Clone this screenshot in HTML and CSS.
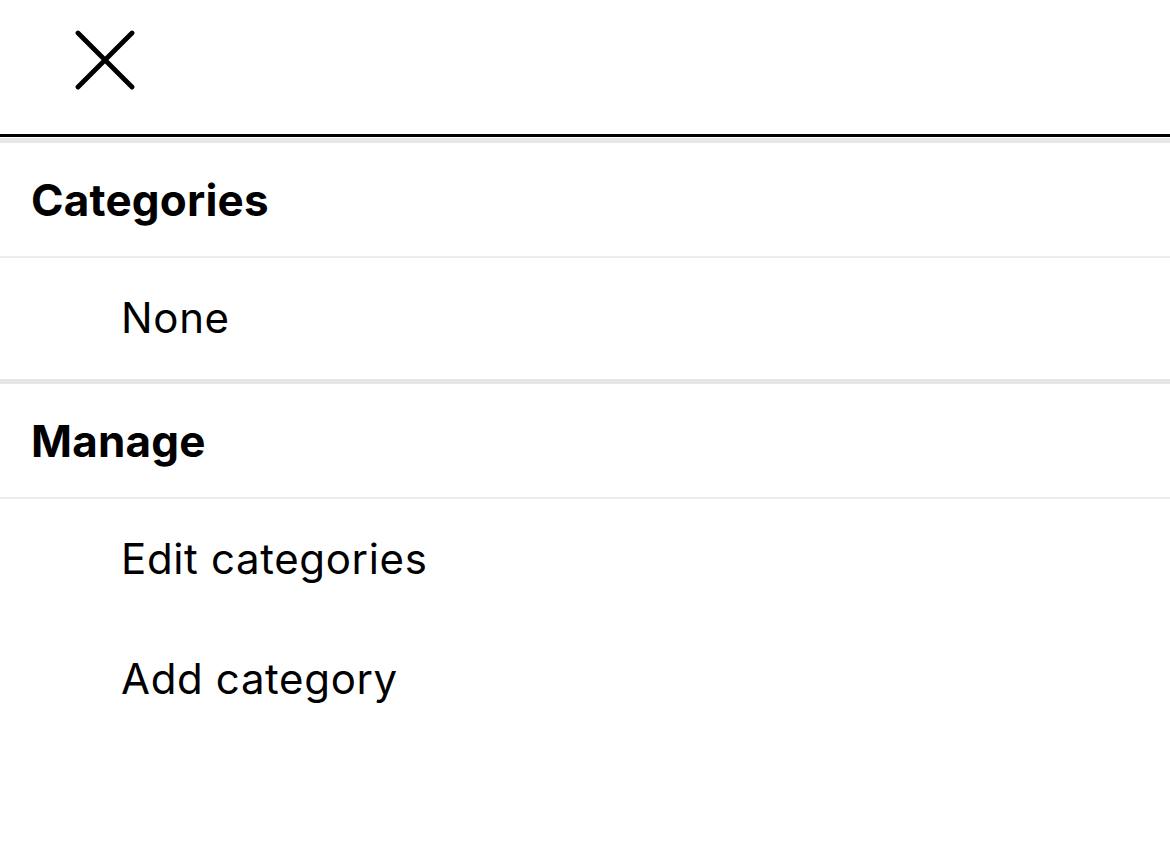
FILE: index.html
```html
<!DOCTYPE html>
<html lang="en">
<head>
<meta charset="utf-8">
<title>Categories</title>
<link rel="stylesheet" href="styles.css">
</head>
<body>
<div class="sheet">
  <header class="topbar">
    <button class="close" aria-label="Close">
      <svg width="60" height="60" viewBox="0 0 60 60" fill="none" stroke="#000" stroke-width="4.8" stroke-linecap="round">
        <path d="M3 3 L57 57 M57 3 L3 57"/>
      </svg>
    </button>
  </header>
  <div class="band"></div>
  <section class="group">
    <div class="group-title">Categories</div>
    <div class="item">None</div>
  </section>
  <div class="band"></div>
  <section class="group">
    <div class="group-title">Manage</div>
    <div class="item">Edit categories</div>
    <div class="item">Add category</div>
  </section>
</div>
</body>
</html>
```

FILE: styles.css
```css
html, body {
  margin: 0;
  padding: 0;
  background: #fff;
}
body {
  font-family: Inter, "Noto Sans", "Liberation Sans", sans-serif;
  color: #000;
}
.sheet {
  width: 1170px;
}
.topbar {
  height: 134px;
  border-bottom: 3px solid #000;
  display: flex;
  align-items: center;
  box-sizing: content-box;
}
.close {
  margin-left: 75px;
  margin-top: -14px;
  padding: 0;
  border: 0;
  background: none;
  width: 60px;
  height: 60px;
  display: flex;
}
.band {
  height: 5px;
  background: #e6e6e6;
  border-top: 1px solid #fff;
}
.group-title {
  height: 113px;
  display: flex;
  align-items: center;
  padding-left: 31px;
  font-size: 44px;
  font-weight: 700;
  letter-spacing: 0.2px;
  border-bottom: 2px solid #ececec;
}
.item {
  height: 118px;
  padding-bottom: 2px;
  display: flex;
  align-items: center;
  padding-left: 121px;
  font-size: 42px;
  font-weight: 400;
  letter-spacing: 0.65px;
}
```
